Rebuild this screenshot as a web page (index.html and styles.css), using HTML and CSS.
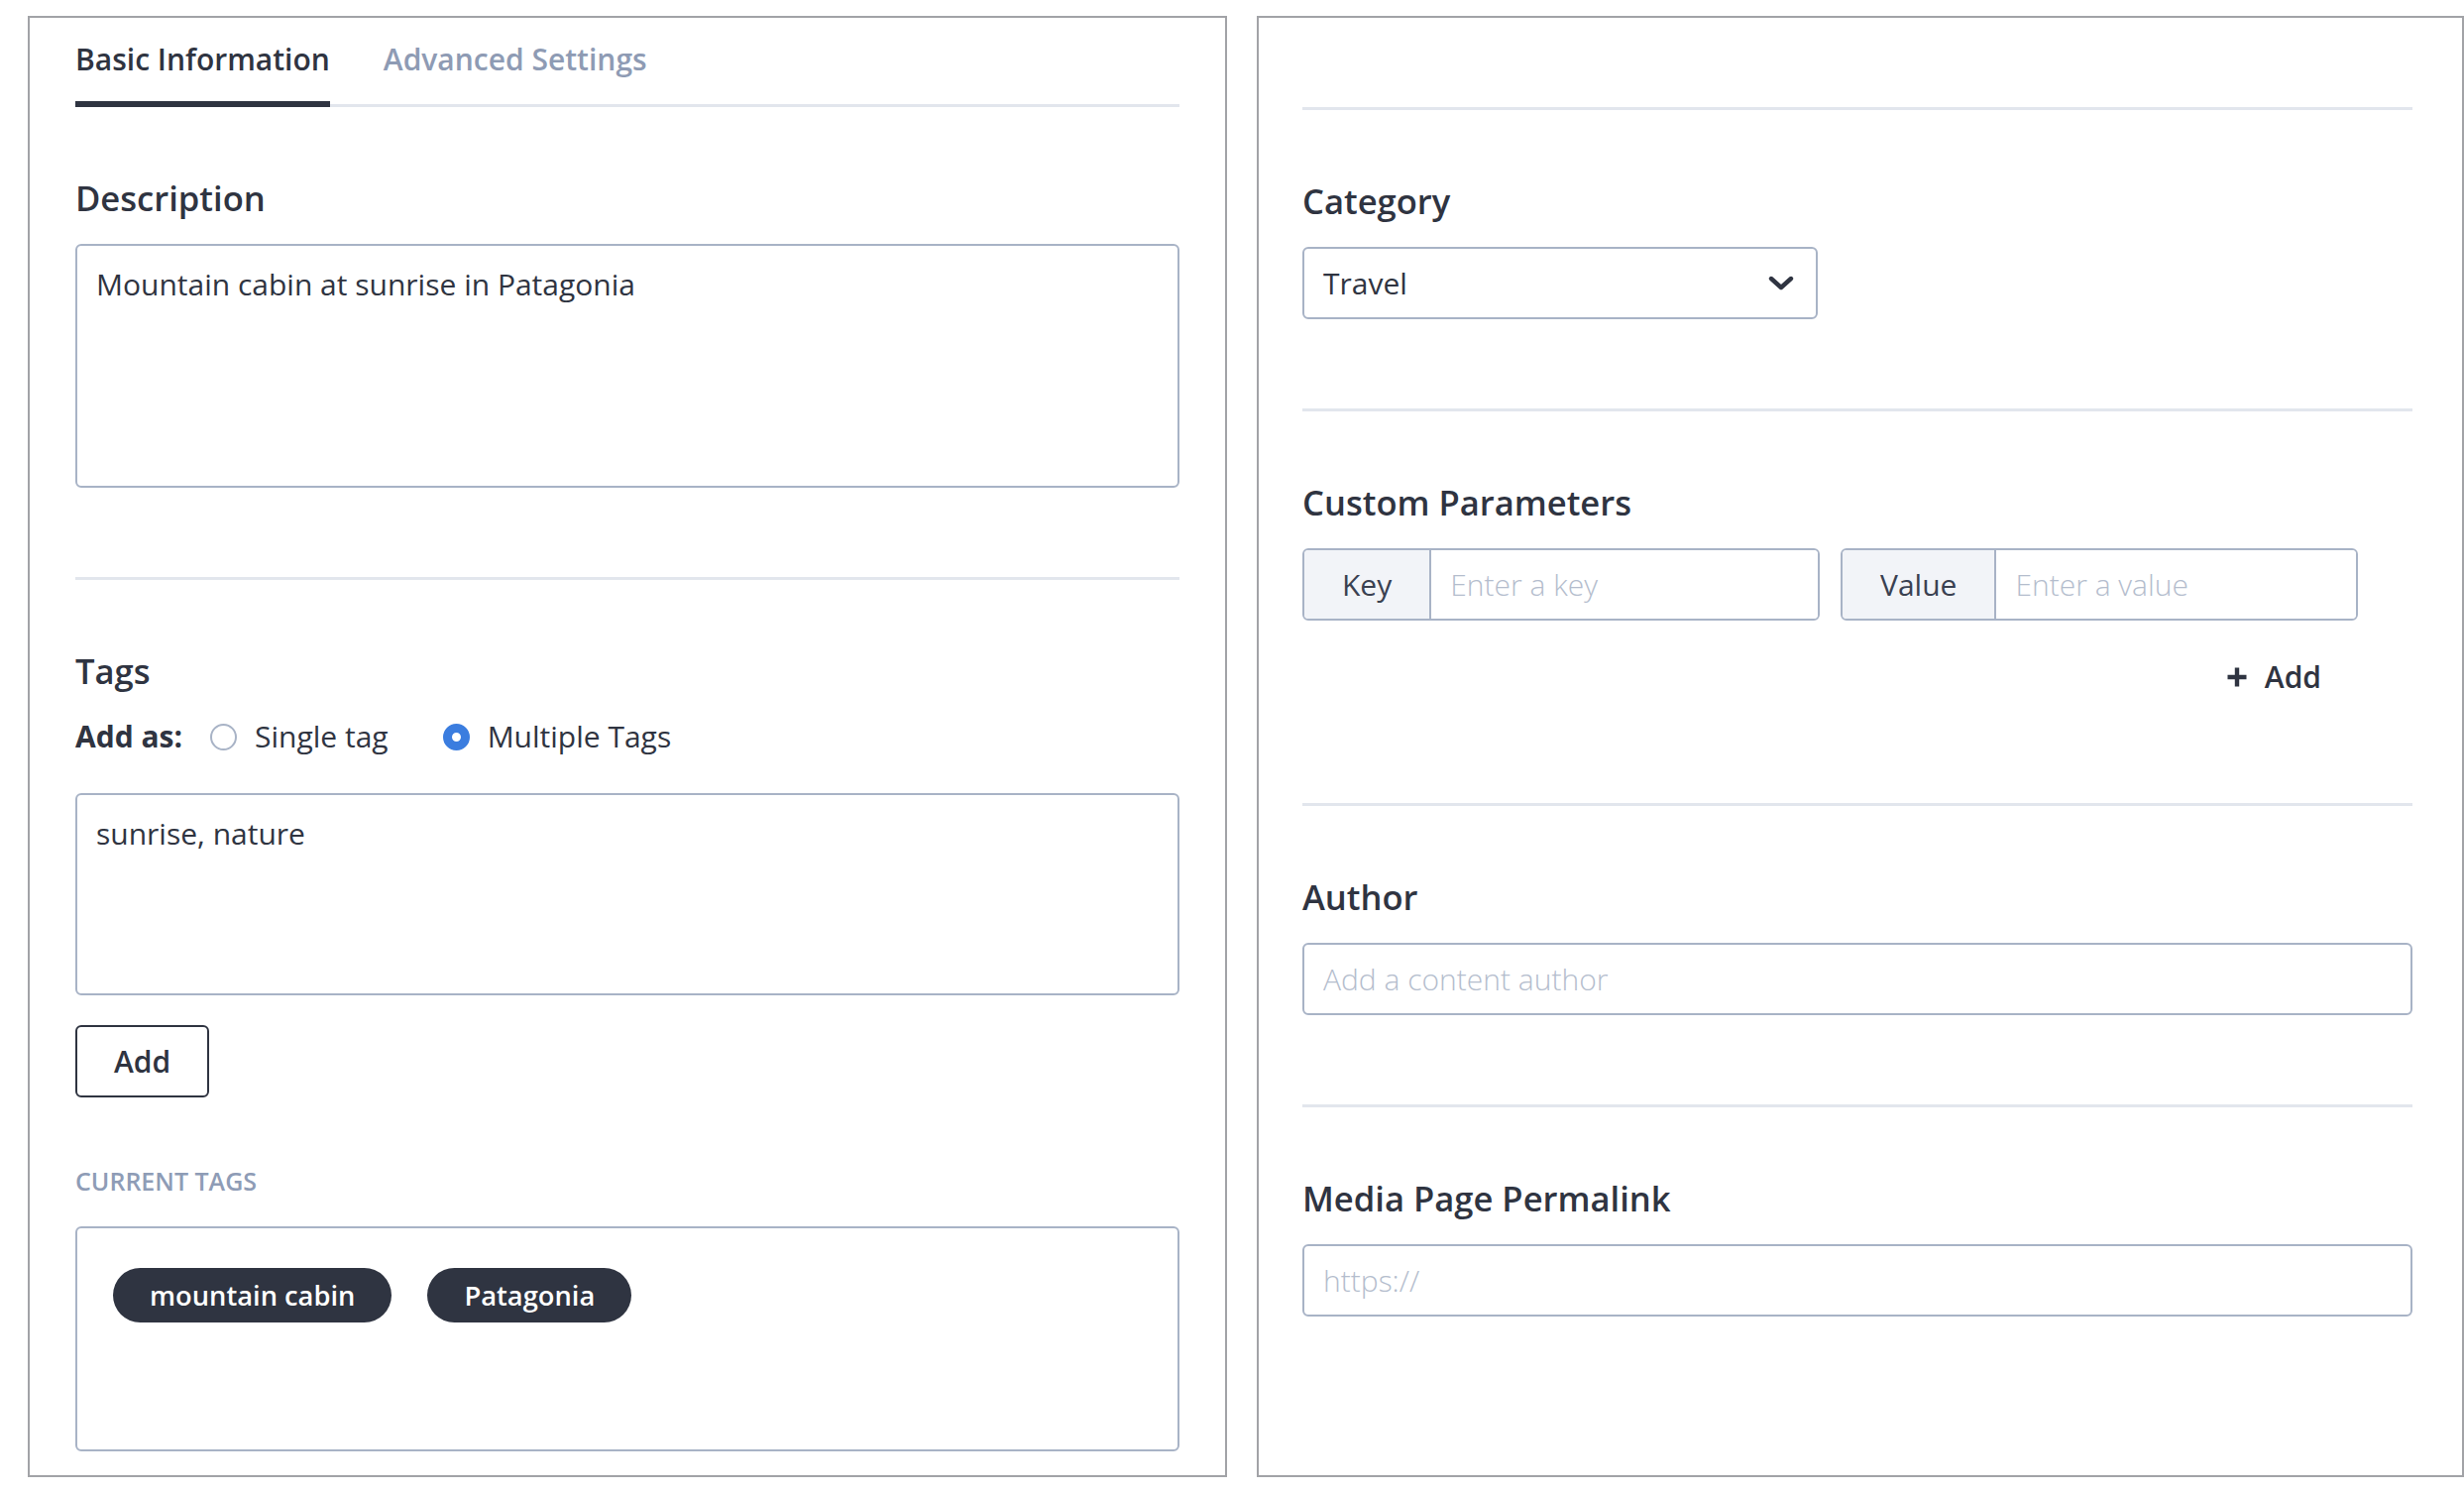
FILE: index.html
```html
<!DOCTYPE html>
<html lang="en">
<head>
<meta charset="utf-8">
<title>Media details</title>
<link rel="stylesheet" href="styles.css">
</head>
<body>
<div class="page">
  <section class="panel panel-left">
    <nav class="tabs">
      <span class="tab active">Basic Information</span>
      <span class="tab">Advanced Settings</span>
    </nav>

    <div class="section">
      <h2 class="heading">Description</h2>
      <textarea class="field textarea desc">Mountain cabin at sunrise in Patagonia</textarea>
    </div>

    <div class="section last">
      <h2 class="heading">Tags</h2>
      <div class="add-as">
        <span class="add-as-label">Add as:</span>
        <label class="radio"><input type="radio" name="mode"><span>Single tag</span></label>
        <label class="radio second"><input type="radio" name="mode" checked><span>Multiple Tags</span></label>
      </div>
      <textarea class="field textarea tags-input">sunrise, nature</textarea>
      <button class="btn-outline" type="button">Add</button>
      <div class="current-label">Current tags</div>
      <div class="current-box">
        <span class="chip">mountain cabin</span>
        <span class="chip">Patagonia</span>
      </div>
    </div>
  </section>

  <section class="panel panel-right">
    <div class="tabs-spacer"></div>

    <div class="section">
      <h2 class="heading">Category</h2>
      <div class="field select">
        <span>Travel</span>
        <svg class="chevron" width="26" height="15" viewBox="0 0 26 15"><polyline points="3,3 13,12 23,3" fill="none" stroke="#2f3441" stroke-width="4.4" stroke-linecap="round" stroke-linejoin="round"/></svg>
      </div>
    </div>

    <div class="section">
      <h2 class="heading">Custom Parameters</h2>
      <div class="params">
        <div class="group">
          <span class="addon">Key</span>
          <input class="group-input" type="text" placeholder="Enter a key">
        </div>
        <div class="group">
          <span class="addon">Value</span>
          <input class="group-input" type="text" placeholder="Enter a value">
        </div>
      </div>
      <div class="add-row">
        <button class="btn-link" type="button">
          <svg width="22" height="22" viewBox="0 0 22 22"><path d="M11 1.5v19M1.5 11h19" stroke="#2f3441" stroke-width="4.4" fill="none"/></svg>
          <span>Add</span>
        </button>
      </div>
    </div>

    <div class="section">
      <h2 class="heading">Author</h2>
      <input class="field input" type="text" placeholder="Add a content author">
    </div>

    <div class="section last">
      <h2 class="heading">Media Page Permalink</h2>
      <input class="field input" type="text" placeholder="https://">
    </div>
  </section>
</div>
</body>
</html>
```

FILE: styles.css
```css
* {
  box-sizing: border-box;
}

html, body {
  margin: 0;
  background: #ffffff;
}

body {
  font-family: "Open Sans", "Noto Sans", sans-serif;
  font-size: 30px;
  line-height: 45px;
  color: #2f3441;
}

.page {
  display: flex;
  align-items: stretch;
  gap: 30px;
  padding: 16px 0 0 28px;
}

.panel {
  border: 2px solid #a2a3a7;
  background: #ffffff;
}

.panel-left {
  width: 1210px;
  flex: none;
  padding: 0 46px 24px 46px;
}

.panel-right {
  flex: 1;
  padding: 0 50px 24px 44px;
}

/* Tabs */
.tabs {
  display: flex;
  gap: 54px;
  padding-top: 19px;
  border-bottom: 3px solid #e2e6ed;
}

.tab {
  font-weight: 600;
  line-height: 45px;
  padding-bottom: 20px;
  border-bottom: 6px solid transparent;
  margin-bottom: -3px;
  color: #8e9bb4;
}

.tab.active {
  color: #2f3441;
  border-bottom-color: #2f3441;
}

.tabs-spacer {
  height: 93px;
  border-bottom: 3px solid #e2e6ed;
}

/* Sections */
.section {
  padding: 66px 0 90px;
  border-bottom: 3px solid #e2e6ed;
}

.section.last {
  padding-bottom: 0;
  border-bottom: none;
}

.heading {
  margin: 0 0 21px;
  font-size: 34.6px;
  line-height: 51px;
  font-weight: 600;
  color: #2f3441;
}

/* Fields */
.field {
  display: block;
  width: 100%;
  border: 2px solid #a8b3c6;
  border-radius: 6px;
  background: #ffffff;
  font-family: inherit;
  font-size: 30px;
  line-height: 45px;
  color: #2f3441;
  outline: none;
}

.textarea {
  resize: none;
  overflow: hidden;
  padding: 16px 19px;
  margin: 0;
}

.desc {
  height: 246px;
}

.tags-input {
  height: 204px;
}

.input {
  height: 73px;
  padding: 12px 19px;
}

.select {
  width: 520px;
  height: 73px;
  padding: 12px 22px 12px 19px;
  display: flex;
  align-items: center;
  justify-content: space-between;
}

.chevron {
  display: block;
}

::placeholder {
  color: #b4bdcd;
  font-weight: 300;
  opacity: 1;
}

/* Add as radios */
.add-as {
  display: flex;
  align-items: center;
  line-height: 40px;
  margin-bottom: 37px;
}

.add-as-label {
  font-weight: 700;
}

.radio {
  display: flex;
  align-items: center;
  gap: 18px;
  margin-left: 28px;
}

.radio.second {
  margin-left: 55px;
}

.radio input {
  appearance: none;
  -webkit-appearance: none;
  width: 27px;
  height: 27px;
  margin: 0;
  border: 2px solid #a8b3c6;
  border-radius: 50%;
  background: #ffffff;
}

.radio input:checked {
  border: 9px solid #3b7ddf;
}

/* Buttons */
.btn-outline {
  display: block;
  margin-top: 30px;
  padding: 12px 37px;
  border: 2px solid #2f3441;
  border-radius: 6px;
  background: #ffffff;
  font-family: inherit;
  font-size: 30px;
  line-height: 45px;
  font-weight: 600;
  color: #2f3441;
}

.current-label {
  margin-top: 66px;
  font-size: 25px;
  line-height: 36px;
  font-weight: 600;
  text-transform: uppercase;
  color: #8e9cb6;
}

.current-box {
  margin-top: 28px;
  height: 227px;
  border: 2px solid #a8b3c6;
  border-radius: 6px;
  padding: 40px 36px;
  display: flex;
  align-items: flex-start;
  gap: 36px;
}

.chip {
  display: inline-block;
  height: 55px;
  padding: 0 37px;
  border-radius: 28px;
  background: #2f3441;
  color: #ffffff;
  font-size: 27.3px;
  line-height: 55px;
  font-weight: 600;
}

/* Custom parameters */
.params {
  display: grid;
  grid-template-columns: 1fr 1fr;
  gap: 21px;
  margin-right: 55px;
}

.group {
  display: flex;
  height: 73px;
  border: 2px solid #a8b3c6;
  border-radius: 6px;
  overflow: hidden;
}

.addon {
  flex: none;
  padding: 0 38px;
  display: flex;
  align-items: center;
  background: #f2f4f8;
  border-right: 2px solid #a8b3c6;
  color: #3a4151;
}

.group-input {
  flex: 1;
  min-width: 0;
  border: none;
  outline: none;
  padding: 0 19px;
  font-family: inherit;
  font-size: 30px;
  color: #2f3441;
  background: #ffffff;
}

.add-row {
  display: flex;
  justify-content: flex-end;
  margin-top: 22px;
  margin-right: 55px;
}

.btn-link {
  display: inline-flex;
  align-items: center;
  gap: 17px;
  padding: 12px 37px 15px;
  border: none;
  background: none;
  font-family: inherit;
  font-size: 30px;
  line-height: 45px;
  font-weight: 600;
  color: #2f3441;
}

.btn-link svg {
  display: block;
}
```
